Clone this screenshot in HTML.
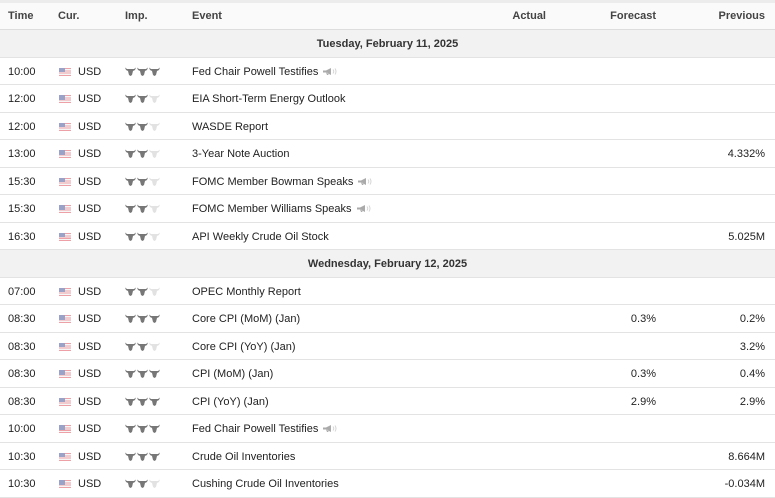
<!DOCTYPE html>
<html><head><meta charset="utf-8"><style>
*{margin:0;padding:0;box-sizing:border-box}
body{width:775px;height:492px;overflow:hidden;background:#fff;font-family:"Liberation Sans",Arial,sans-serif;font-size:11px;color:#222;position:relative}
.top{position:absolute;left:0;top:0;width:775px;height:3px;background:#ececec}
.hdr{position:absolute;left:0;top:3px;width:775px;height:27px;background:#fafafa;border-bottom:1px solid #ddd;font-weight:bold;color:#444}
.row{position:absolute;left:0;width:775px;height:27.5px;border-bottom:1px solid #e3e3e3}
.date{background:#f2f2f2;font-weight:bold;text-align:center;color:#333;line-height:28px}
.c{position:absolute;top:0;line-height:28px;white-space:nowrap}
.hdr .c{line-height:26px}
.r{text-align:right}
.flag{position:absolute;left:59px;top:10px;width:12px;height:8px;background:repeating-linear-gradient(#eda0a6 0 1.15px,#f6f6f6 1.15px 2.3px)}
.flag:before{content:"";position:absolute;left:0;top:0;width:6px;height:4.6px;background:#9aa2c8}
.imp{position:absolute;left:125px;top:9px}
.spk{display:inline-block;vertical-align:-1px;margin-left:5px}
</style></head><body>
<div class="top"></div>
<div class="hdr">
<span class="c" style="left:8px">Time</span><span class="c" style="left:58px">Cur.</span><span class="c" style="left:125px">Imp.</span><span class="c" style="left:192px">Event</span>
<span class="c r" style="right:229px">Actual</span><span class="c r" style="right:119px">Forecast</span><span class="c r" style="right:10px">Previous</span>
</div>
<svg width="0" height="0" style="position:absolute"><defs>
<symbol id="b" viewBox="0 0 11 9"><path d="M0 0.5 L2 2 L9 2 L11 0.5 L10 3 L8 4 L7 8 L5.5 9 L4 8 L3 4 L1 3 Z"/></symbol>
<symbol id="s" viewBox="0 0 14 9"><path d="M0 3.5 L3 3.5 L8 1 L8 8 L3 5.5 L0 5.5 Z M3 5.5 L4 8 L5.5 8 L5 6" fill="#aaa"/><path d="M10 2.5 Q11.5 4.5 10 6.5 M12 1.5 Q14 4.5 12 7.5" stroke="#d5d5d5" fill="none"/></symbol>
</defs></svg>
<div id="rows"></div>
<script>
var d=[
['date','Tuesday, February 11, 2025'],
['10:00',3,'Fed Chair Powell Testifies',1,'','',''],
['12:00',2,'EIA Short-Term Energy Outlook',0,'','',''],
['12:00',2,'WASDE Report',0,'','',''],
['13:00',2,'3-Year Note Auction',0,'','','4.332%'],
['15:30',2,'FOMC Member Bowman Speaks',1,'','',''],
['15:30',2,'FOMC Member Williams Speaks',1,'','',''],
['16:30',2,'API Weekly Crude Oil Stock',0,'','','5.025M'],
['date','Wednesday, February 12, 2025'],
['07:00',2,'OPEC Monthly Report',0,'','',''],
['08:30',3,'Core CPI (MoM) (Jan)',0,'','0.3%','0.2%'],
['08:30',2,'Core CPI (YoY) (Jan)',0,'','','3.2%'],
['08:30',3,'CPI (MoM) (Jan)',0,'','0.3%','0.4%'],
['08:30',3,'CPI (YoY) (Jan)',0,'','2.9%','2.9%'],
['10:00',3,'Fed Chair Powell Testifies',1,'','',''],
['10:30',3,'Crude Oil Inventories',0,'','','8.664M'],
['10:30',2,'Cushing Crude Oil Inventories',0,'','','-0.034M']];
var h='';d.forEach(function(r,i){var t=30+i*27.5;
if(r[0]=='date'){h+='<div class="row date" style="top:'+t+'px">'+r[1]+'</div>';return;}
var im='';for(var k=0;k<3;k++)im+='<svg width="11" height="9" style="margin-right:1px;fill:'+(k<r[1]?'#777':'#e2e2e2')+'"><use href="#b"/></svg>';
h+='<div class="row" style="top:'+t+'px"><span class="c" style="left:8px">'+r[0]+'</span><span class="flag"></span><span class="c" style="left:78px">USD</span><span class="imp">'+im+'</span><span class="c" style="left:192px">'+r[2]+(r[3]?'<svg class="spk" width="14" height="9"><use href="#s"/></svg>':'')+'</span><span class="c r" style="right:229px">'+r[4]+'</span><span class="c r" style="right:119px">'+r[5]+'</span><span class="c r" style="right:10px">'+r[6]+'</span></div>';});
document.getElementById('rows').innerHTML=h;
</script>
</body></html>
